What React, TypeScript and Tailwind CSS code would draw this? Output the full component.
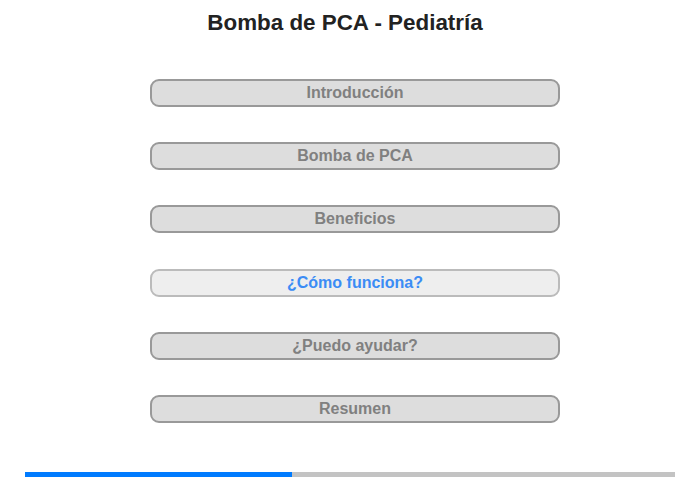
import React from 'react';

const items = [
  'Introducción',
  'Bomba de PCA',
  'Beneficios',
  '¿Cómo funciona?',
  '¿Puedo ayudar?',
  'Resumen',
];

const activeIndex = 3;

export default function App() {
  return (
    <div
      className="w-[700px] h-[480px] bg-white flex flex-col items-center"
      style={{ fontFamily: '"Liberation Sans", Arial, sans-serif' }}
    >
      <h1 className="mt-[9px] mr-[10px] h-[28px] leading-[28px] text-[22.4px] font-bold text-[#222222]">
        Bomba de PCA - Pediatría
      </h1>
      <div className="mt-[42px] ml-[10px] flex flex-col gap-[35.2px]">
        {items.map((label, index) => {
          const active = index === activeIndex;
          return (
            <button
              key={label}
              className={
                active
                  ? 'w-[410px] h-[28px] rounded-[9px] border-2 border-[#bbbbbb] bg-[#eeeeee] text-[#3b8cf5] text-[16px] font-bold leading-none'
                  : 'w-[410px] h-[28px] rounded-[9px] border-2 border-[#999999] bg-[#dddddd] text-[#808080] text-[16px] font-bold leading-none'
              }
            >
              {label}
            </button>
          );
        })}
      </div>
      <div className="mt-[49px] w-[650px] h-[5px] bg-[#c3c3c3] flex">
        <div className="w-[267px] h-full bg-[#007bff]" />
      </div>
    </div>
  );
}
